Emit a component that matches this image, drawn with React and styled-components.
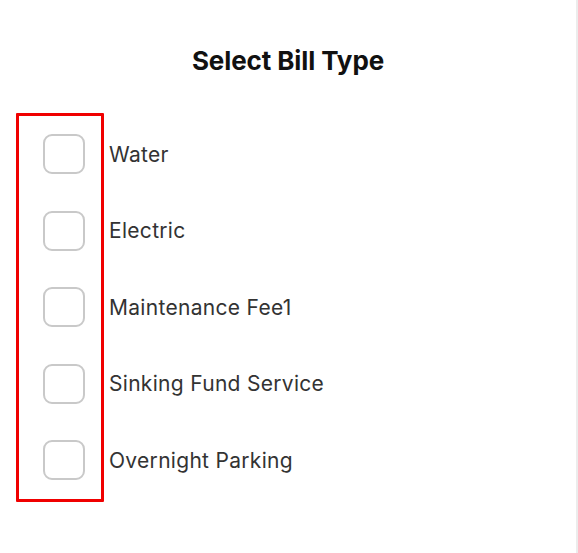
import React from 'react';
import styled, { createGlobalStyle } from 'styled-components';

const GlobalStyle = createGlobalStyle`
  html, body {
    margin: 0;
    padding: 0;
    background: #fff;
  }
  body {
    font-family: Inter, "Liberation Sans", Arial, sans-serif;
  }
`;

const Page = styled.div`
  box-sizing: border-box;
  width: 578px;
  height: 553px;
  border-right: 2px solid #ececec;
  background: #fff;
`;

const Header = styled.div`
  height: 113px;
  box-sizing: border-box;
  padding-top: 45px;
  text-align: center;
`;

const Title = styled.h1`
  margin: 0;
  font-size: 26px;
  line-height: 32px;
  font-weight: 700;
  color: #111;
  letter-spacing: -0.1px;
`;

const List = styled.div`
  display: flex;
  align-items: flex-start;
  padding-left: 16px;
`;

const CheckColumn = styled.div`
  display: flex;
  flex-direction: column;
  width: 82px;
  box-sizing: content-box;
  border: 3px solid #f00000;
  border-radius: 1px;
`;

const LabelColumn = styled.div`
  display: flex;
  flex-direction: column;
  padding-top: 3px;
  margin-left: 5px;
`;

const Row = styled.div`
  height: 76.5px;
  display: flex;
  align-items: center;
  padding-left: ${props => (props.check ? '24px' : '0')};
`;

const Checkbox = styled.span`
  display: block;
  box-sizing: border-box;
  width: 42px;
  height: 40px;
  border: 2px solid ${props => (props.checked ? '#2f7cf6' : '#c9c9c9')};
  border-radius: 9px;
  background: #fff;
  cursor: pointer;
`;

const Label = styled.span`
  font-size: 21px;
  color: #333;
  letter-spacing: 0.3px;
`;

const billTypes = [
  'Water',
  'Electric',
  'Maintenance Fee1',
  'Sinking Fund Service',
  'Overnight Parking',
];

export default function App() {
  const [selected, setSelected] = React.useState({});
  const toggle = name => setSelected(s => ({ ...s, [name]: !s[name] }));

  return (
    <>
      <GlobalStyle />
      <Page>
        <Header>
          <Title>Select Bill Type</Title>
        </Header>
        <List>
          <CheckColumn>
            {billTypes.map(name => (
              <Row check key={name}>
                <Checkbox checked={!!selected[name]} onClick={() => toggle(name)} />
              </Row>
            ))}
          </CheckColumn>
          <LabelColumn>
            {billTypes.map(name => (
              <Row key={name}>
                <Label>{name}</Label>
              </Row>
            ))}
          </LabelColumn>
        </List>
      </Page>
    </>
  );
}
